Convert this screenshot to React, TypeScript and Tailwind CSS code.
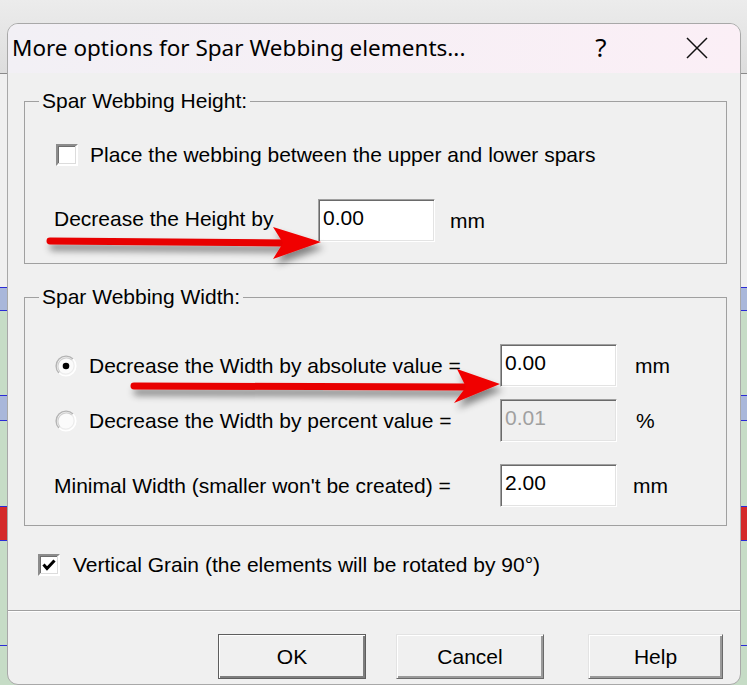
import React from "react";

const UI = "font-['Liberation_Sans',Arial,sans-serif]";

function CheckBox({ checked }: { checked?: boolean }) {
  return (
    <div className="w-[22px] h-[22px] shrink-0 border-2 border-t-[#8c8c8c] border-l-[#8c8c8c] border-r-white border-b-white bg-white shadow-[inset_-1px_-1px_0_#dcdcdc,inset_1px_1px_0_#6e6e6e] flex items-center justify-center">
      {checked && (
        <svg width="18" height="18" viewBox="0 0 18 18">
          <path d="M3.5 8.5 L7 12.5 L14.5 4.5" fill="none" stroke="#000" strokeWidth="3" />
        </svg>
      )}
    </div>
  );
}

function Radio({ checked }: { checked?: boolean }) {
  return (
    <svg width="22" height="22" viewBox="0 0 22 22" className="shrink-0">
      <circle cx="11" cy="11" r="10" fill="#fbfbfb" />
      <path d="M3.93 18.07 A10 10 0 0 1 18.07 3.93" fill="none" stroke="#b4b4b4" strokeWidth="1.4" />
      <path d="M18.07 3.93 A10 10 0 0 1 3.93 18.07" fill="none" stroke="#ffffff" strokeWidth="1.4" />
      <path d="M5 17 A8.5 8.5 0 0 1 17 5" fill="none" stroke="#d0d0d0" strokeWidth="1.2" />
      <path d="M17 5 A8.5 8.5 0 0 1 5 17" fill="none" stroke="#ececec" strokeWidth="1.2" />
      {checked && <circle cx="11" cy="11" r="3.3" fill="#000" />}
    </svg>
  );
}

function Field({ value, disabled }: { value: string; disabled?: boolean }) {
  return (
    <div
      className={`w-[117px] h-[43px] shrink-0 border border-t-[#a0a0a0] border-l-[#a0a0a0] border-r-white border-b-white shadow-[inset_1px_1px_0_#6a6a6a,inset_-1px_-1px_0_#e3e3e3] pl-[4px] pt-[6px] text-[21px] leading-[24px] ${
        disabled ? "bg-[#f0f0f0] text-[#a0a0a0]" : "bg-white text-black"
      }`}
    >
      {value}
    </div>
  );
}

function Button({ label, width, def }: { label: string; width: string; def?: boolean }) {
  return (
    <div
      className={`${width} h-[45px] shrink-0 bg-[#f0f0f0] flex items-center justify-center text-[21px] text-black ${
        def
          ? "border border-[#5e5e5e] shadow-[inset_1px_1px_0_#ffffff,inset_-2px_-2px_0_#7e7e7e]"
          : "border border-t-[#e3e3e3] border-l-[#e3e3e3] border-r-[#6a6a6a] border-b-[#6a6a6a] shadow-[inset_1px_1px_0_#ffffff,inset_-2px_-2px_0_#9a9a9a]"
      }`}
    >
      {label}
    </div>
  );
}

export default function App() {
  return (
    <div className={`relative w-[747px] h-[685px] overflow-hidden ${UI}`}>
      {/* background application window */}
      <div className="flex flex-col w-full h-full">
        <div className="h-[73px] bg-gradient-to-b from-[#ececec] to-[#dddddd]" />
        <div className="h-[1px] bg-[#8a8a8a]" />
        <div className="h-[213px] bg-[#f0f0f0]" />
        <div className="h-[1px] bg-[#2b2bd6]" />
        <div className="h-[22px] bg-[#a9b7da]" />
        <div className="h-[1px] bg-[#2b2bd6]" />
        <div className="h-[84px] bg-[#c6dcc6]" />
        <div className="h-[1px] bg-[#2b2bd6]" />
        <div className="h-[24px] bg-[#a9b7da]" />
        <div className="h-[1px] bg-[#2b2bd6]" />
        <div className="h-[85px] bg-[#c6dcc6]" />
        <div className="h-[1px] bg-[#2b2bd6]" />
        <div className="h-[33px] bg-[#d42a2a]" />
        <div className="h-[1px] bg-[#2b2bd6]" />
        <div className="h-[104px] bg-[#c6dcc6]" />
        <div className="h-[1px] bg-[#2b2bd6]" />
        <div className="flex-1 bg-[#c6dcc6]" />
      </div>

      {/* dialog window */}
      <div className="absolute left-[7px] top-[23px] w-[734px] h-[662px] rounded-[11px] border border-[#a8a8a8] overflow-hidden flex flex-col bg-[#f0f0f0]">
        <div className="h-[49px] shrink-0 flex items-center bg-gradient-to-r from-[#f2f0f5] to-[#fbeff6] font-['Noto_Sans',sans-serif]">
          <div className="pl-[4px] text-[22.5px] leading-[28px] text-black flex-1 pb-[2px]">
            More options for Spar Webbing elements...
          </div>
          <div className="w-[20px] text-[26px] leading-[30px] text-black text-center mr-[74px] pb-[4px]">?</div>
          <svg width="24" height="24" viewBox="0 0 24 24" className="mr-[31px] mb-[2px]">
            <path d="M2 2 L22 22 M22 2 L2 22" stroke="#111" strokeWidth="1.5" />
          </svg>
        </div>

        <div className="flex-1 flex flex-col text-[21px] leading-[24px] text-black">
          {/* Spar Webbing Height */}
          <fieldset className="mt-[16px] ml-[16px] w-[703px] border border-[#a0a0a0]">
            <legend className="ml-[14px] px-[3px] leading-[24px]">Spar Webbing Height:</legend>
            <div className="pl-[29px] pb-[21px] flex flex-col">
              <div className="mt-[31px] ml-[2px] h-[22px] flex items-center gap-[12px]">
                <CheckBox />
                <span className="whitespace-nowrap">Place the webbing between the upper and lower spars</span>
              </div>
              <div className="mt-[33px] h-[43px] flex items-center">
                <span className="w-[264px] whitespace-nowrap pb-[4px]">Decrease the Height by</span>
                <Field value="0.00" />
                <span className="ml-[15px]">mm</span>
              </div>
            </div>
          </fieldset>

          {/* Spar Webbing Width */}
          <fieldset className="mt-[21px] ml-[16px] w-[703px] border border-[#a0a0a0]">
            <legend className="ml-[14px] px-[3px] leading-[24px]">Spar Webbing Width:</legend>
            <div className="pl-[29px] pb-[18px] flex flex-col">
              <div className="mt-[35px] h-[43px] flex items-center">
                <div className="w-[446px] flex items-center gap-[12px] pl-[1px]">
                  <Radio checked />
                  <span className="whitespace-nowrap">Decrease the Width by absolute value =</span>
                </div>
                <Field value="0.00" />
                <span className="ml-[18px]">mm</span>
              </div>
              <div className="mt-[12px] h-[43px] flex items-center">
                <div className="w-[446px] flex items-center gap-[12px] pl-[1px]">
                  <Radio />
                  <span className="whitespace-nowrap">Decrease the Width by percent value =</span>
                </div>
                <Field value="0.01" disabled />
                <span className="ml-[19px]">%</span>
              </div>
              <div className="mt-[22px] h-[43px] flex items-center">
                <span className="w-[446px] whitespace-nowrap">Minimal Width (smaller won't be created) =</span>
                <Field value="2.00" />
                <span className="ml-[16px]">mm</span>
              </div>
            </div>
          </fieldset>

          <div className="mt-[27px] ml-[30px] h-[23px] flex items-center gap-[13px]">
            <CheckBox checked />
            <span className="whitespace-nowrap">Vertical Grain (the elements will be rotated by 90°)</span>
          </div>

          <div className="mt-[34px] h-[2px] border-t border-t-[#a0a0a0] border-b border-b-white" />

          <div className="mt-[22px] pl-[210px] flex">
            <Button label="OK" width="w-[148px]" def />
            <div className="ml-[30px]">
              <Button label="Cancel" width="w-[148px]" />
            </div>
            <div className="ml-[44px]">
              <Button label="Help" width="w-[135px]" />
            </div>
          </div>
        </div>
      </div>

      {/* red annotation arrows */}
      <svg className="absolute inset-0 pointer-events-none" width="747" height="685" viewBox="0 0 747 685">
        <defs>
          <filter id="ash" x="-20%" y="-100%" width="140%" height="300%">
            <feDropShadow dx="3" dy="6" stdDeviation="3.5" floodColor="#000" floodOpacity="0.45" />
          </filter>
        </defs>
        <g filter="url(#ash)">
          <line x1="50" y1="241" x2="284" y2="243" stroke="#e80000" strokeWidth="7" strokeLinecap="round" />
          <polygon points="273,227 321,242 273,259 283,243" fill="#f00000" />
        </g>
        <g filter="url(#ash)">
          <line x1="134" y1="386" x2="466" y2="387" stroke="#e80000" strokeWidth="7" strokeLinecap="round" />
          <polygon points="457,369 500,384 454,403 466,387" fill="#f00000" />
        </g>
      </svg>
    </div>
  );
}
